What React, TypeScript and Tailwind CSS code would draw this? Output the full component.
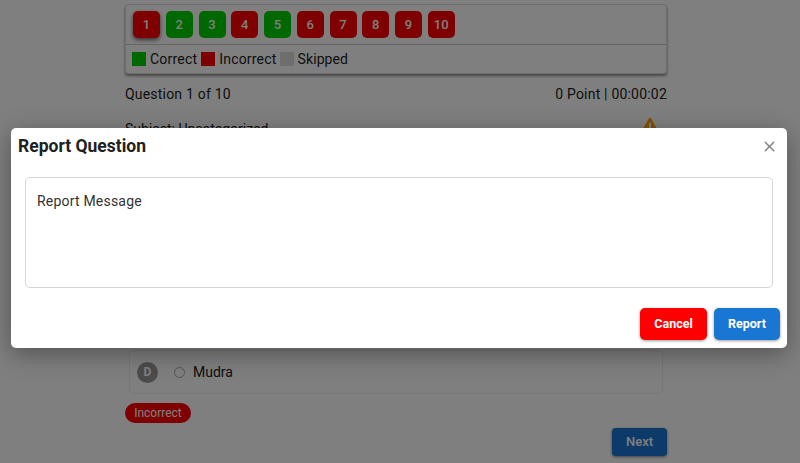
import { X } from 'lucide-react';

const questions = [
    { n: 1, ok: false },
    { n: 2, ok: true },
    { n: 3, ok: true },
    { n: 4, ok: false },
    { n: 5, ok: true },
    { n: 6, ok: false },
    { n: 7, ok: false },
    { n: 8, ok: false },
    { n: 9, ok: false },
    { n: 10, ok: false },
];

export default function App() {
    return (
        <div className="relative h-[463px] w-[800px] overflow-hidden bg-white font-['Roboto',sans-serif] text-[#212121]">
            {/* PAGE BEHIND THE DIALOG */}
            <div className="ml-[125px] flex w-[542px] flex-col pt-[4px]">
                <div className="rounded-[4px] border border-[#ddd] bg-white shadow-[0_2px_3px_rgba(0,0,0,0.45)]">
                    <div className="flex h-[40px] items-center gap-[5.75px] border-b border-[#ccc] px-[7px]">
                        {questions.map((q) => (
                            <div
                                key={q.n}
                                className={`flex h-[27px] w-[27px] items-center justify-center rounded-[5px] text-[13px] font-medium text-white ${q.ok ? 'bg-[#00d000]' : 'bg-[#ff0000]'} ${q.n === 1 ? 'shadow-[0_2px_4px_rgba(0,0,0,0.6)]' : ''}`}
                            >
                                {q.n}
                            </div>
                        ))}
                    </div>
                    <div className="flex h-[28px] items-center px-[6px] text-[14px] tracking-[0.2px]">
                        <span className="mr-[4px] h-[14px] w-[14px] bg-[#00d000]" />
                        <span className="mr-[4px]">Correct</span>
                        <span className="mr-[4px] h-[14px] w-[14px] bg-[#ff0000]" />
                        <span className="mr-[3px]">Incorrect</span>
                        <span className="mr-[4px] h-[14px] w-[14px] bg-[#ddd]" />
                        <span className="tracking-[0.1px]">Skipped</span>
                    </div>
                </div>

                <div className="mt-[10px] flex h-[20px] items-center justify-between text-[14px] tracking-[0.2px]">
                    <span>Question 1 of 10</span>
                    <span>0 Point | 00:00:02</span>
                </div>

                <div className="mt-[15px] flex h-[20px] items-center justify-between text-[14px]">
                    <span>Subject: Uncategorized</span>
                    <svg width="20" height="18" viewBox="0 0 20 18" className="mr-[7px] mt-[-6px]">
                        <path d="M10 1.5 L18.5 16.5 H1.5 Z" fill="#ffa500" stroke="#ffa500" strokeWidth="2" strokeLinejoin="round" />
                        <path d="M10 6 V11" stroke="#fff" strokeWidth="2" />
                    </svg>
                </div>

                {/* options A-C are fully covered by the dialog */}
                <div className="h-[211px]" />

                <div className="ml-[4px] mr-[4px] flex h-[44px] items-center rounded-[5px] border border-[#eee] px-[7px] text-[14px]">
                    <span className="flex h-[21px] w-[21px] items-center justify-center rounded-full bg-[#999] text-[12px] font-bold text-white">D</span>
                    <span className="ml-[16px] h-[11px] w-[11px] rounded-full border border-[#aaa]" />
                    <span className="ml-[8px]">Mudra</span>
                </div>

                <div className="mt-[9px] flex h-[20px] w-[66px] items-center justify-center rounded-full bg-[#ff0000] text-[12px] text-white">Incorrect</div>

                <div className="mt-[5px] flex justify-end">
                    <div className="flex h-[28px] w-[55px] items-center justify-center rounded-[4px] bg-[#1976d2] text-[13px] font-medium text-white shadow-[0_1px_3px_rgba(0,0,0,0.5)]">Next</div>
                </div>
            </div>

            {/* BACKDROP + DIALOG */}
            <div className="absolute inset-0 bg-black/50">
                <div className="absolute left-[11px] top-[128px] h-[220px] w-[776px] rounded-[5px] bg-white shadow-[0_6px_24px_rgba(0,0,0,0.35)]">
                    <div className="flex h-[36px] items-center justify-between pl-[7px] pr-[9px]">
                        <h2 className="text-[17.5px] font-bold text-[#212121]">Report Question</h2>
                        <X size={17} strokeWidth={2} className="text-[#808080]" />
                    </div>
                    <div className="mx-[14px] mt-[13px] h-[111px] rounded-[5px] border border-[#d6d6d6] px-[11px] py-[15px] text-[14px] leading-[16px] tracking-[0.2px] text-[#333]">
                        Report Message
                    </div>
                    <div className="mt-[20px] flex justify-end gap-[7px] pr-[7px]">
                        <button className="h-[32px] w-[67px] rounded-[5px] bg-[#ff0000] text-[12.5px] font-bold text-white shadow-[0_1px_3px_rgba(0,0,0,0.4)]">Cancel</button>
                        <button className="h-[32px] w-[66px] rounded-[5px] bg-[#1976d2] text-[12.5px] font-bold text-white shadow-[0_1px_3px_rgba(0,0,0,0.4)]">Report</button>
                    </div>
                </div>
            </div>
        </div>
    );
}
